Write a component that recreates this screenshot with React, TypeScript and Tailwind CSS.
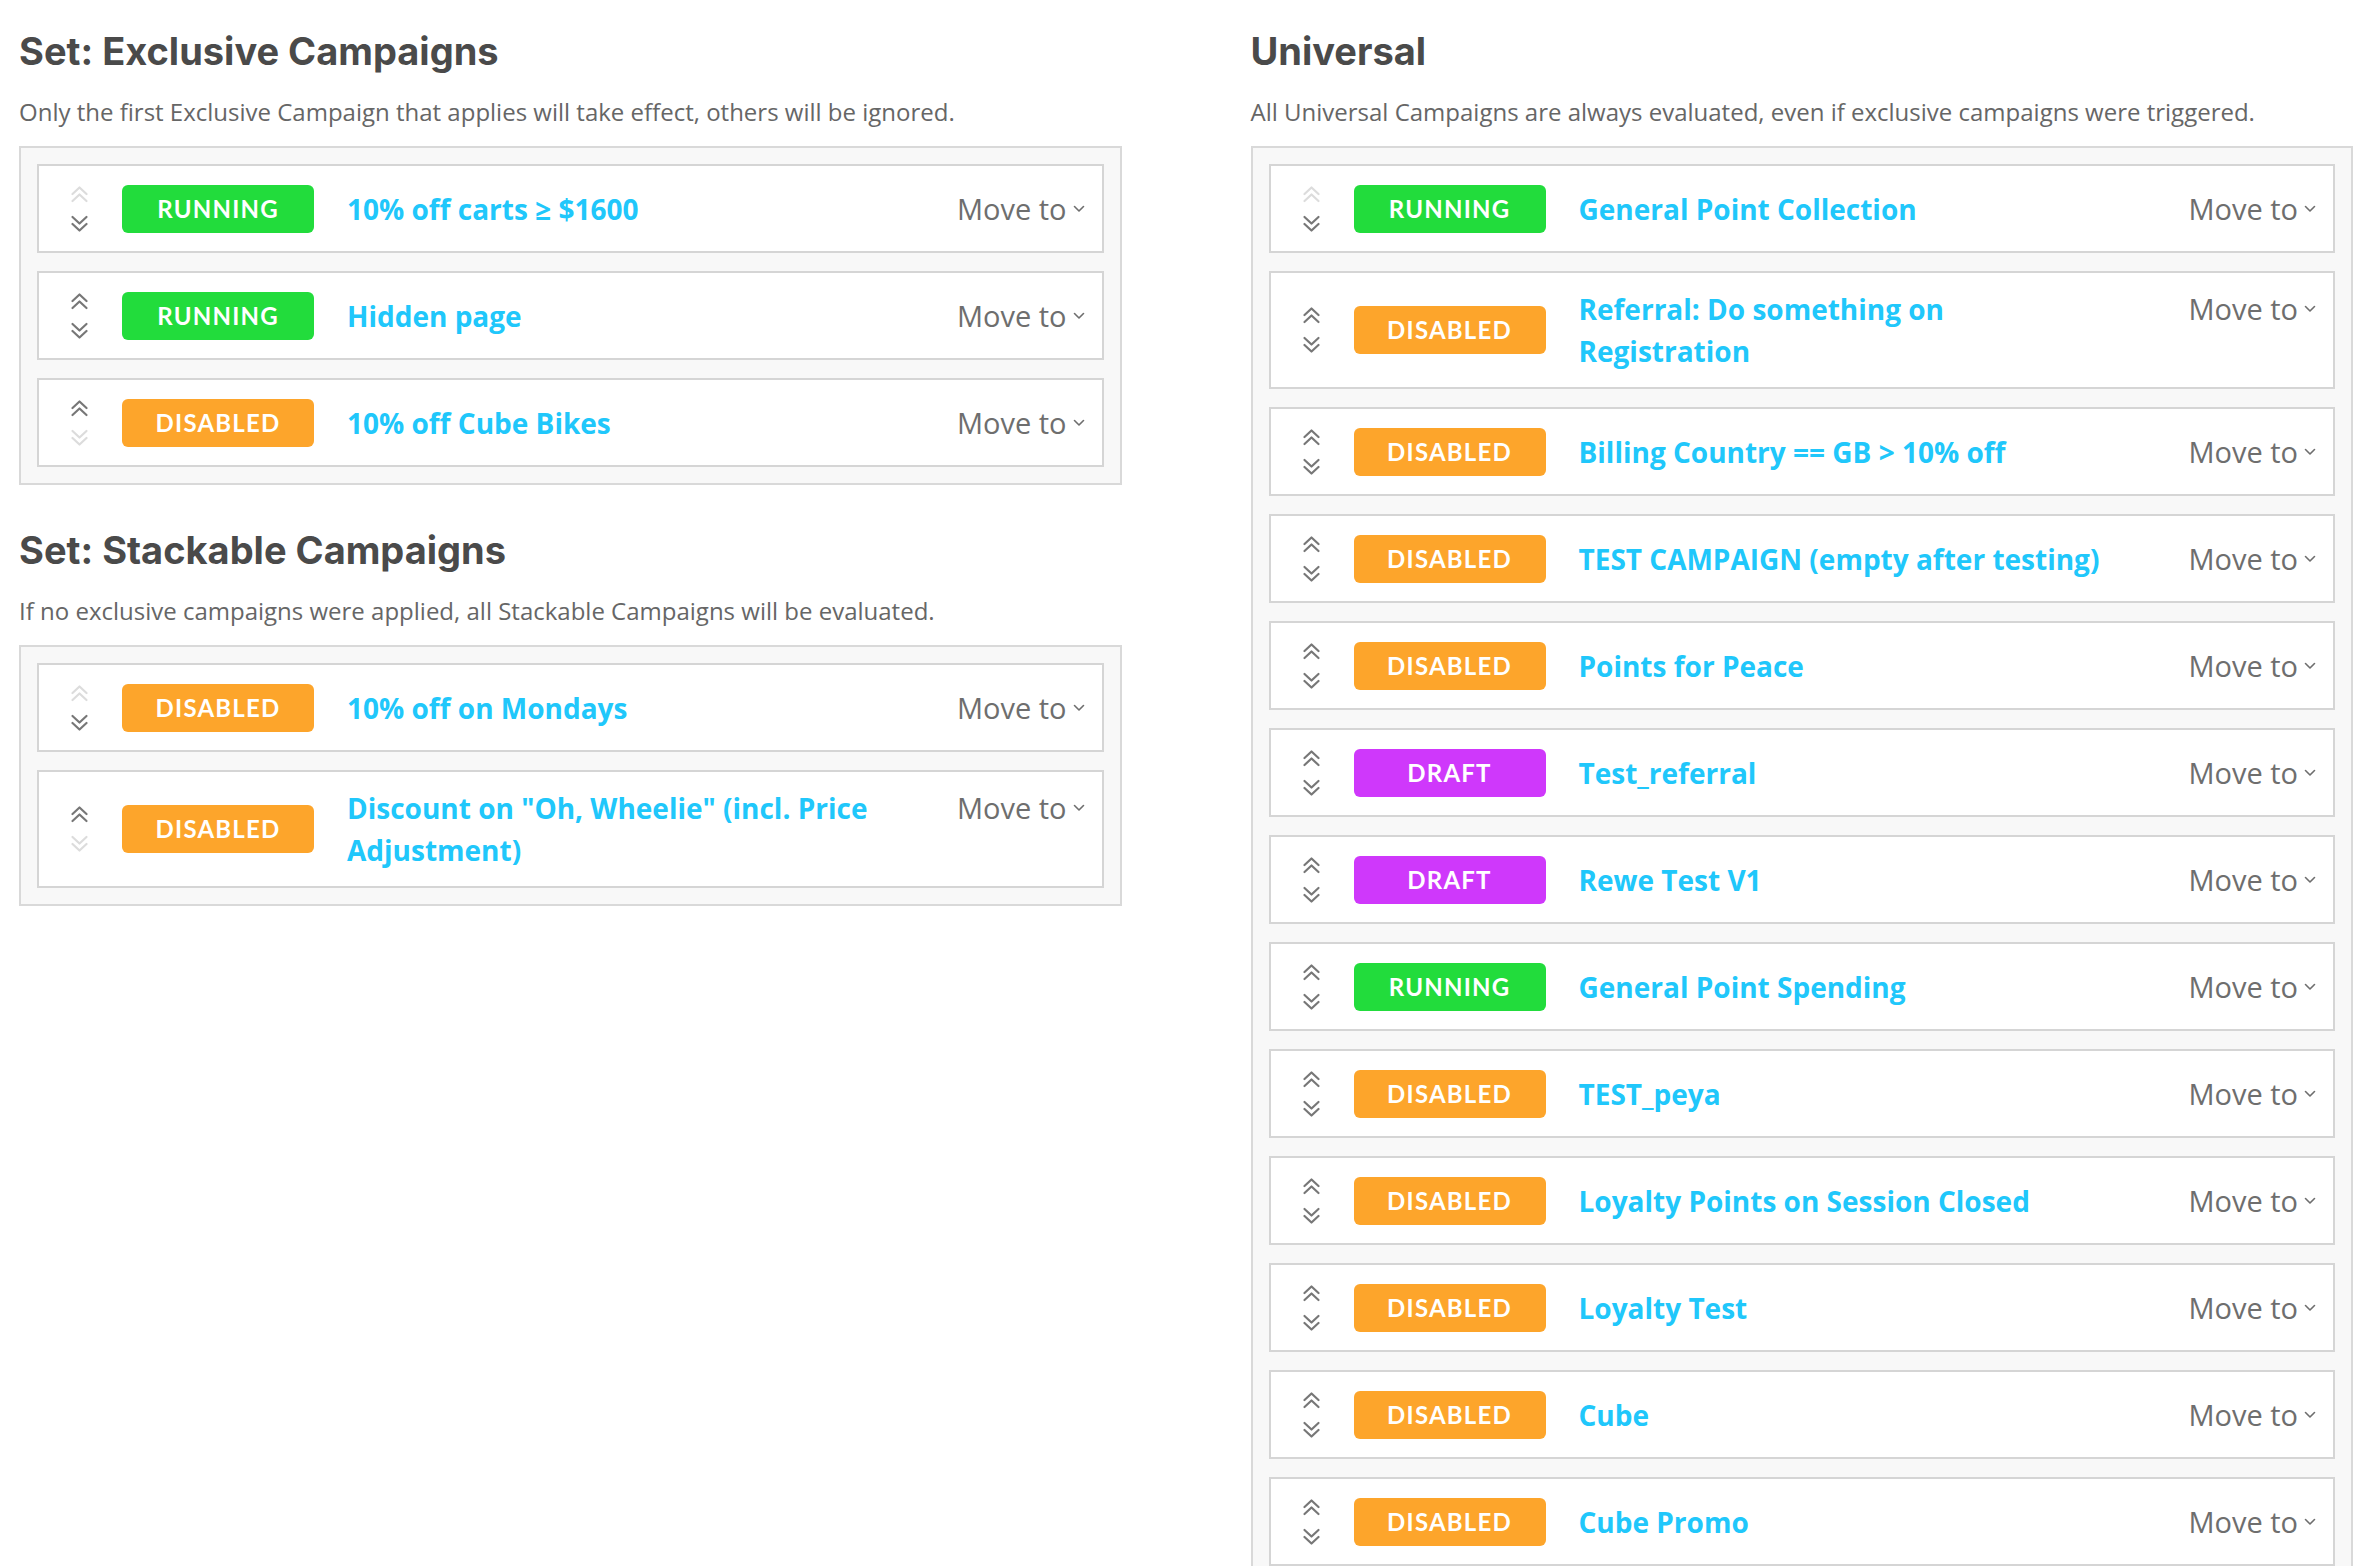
import React from "react";

type Status = "RUNNING" | "DISABLED" | "DRAFT";

interface Campaign {
    name: string;
    status: Status;
}

const STATUS_STYLES: Record<Status, string> = {
    RUNNING: "bg-[#22dc3c]",
    DISABLED: "bg-[#fda52b]",
    DRAFT: "bg-[#cf38fb]",
};

const EXCLUSIVE: Campaign[] = [
    { name: "10% off carts ≥ $1600", status: "RUNNING" },
    { name: "Hidden page", status: "RUNNING" },
    { name: "10% off Cube Bikes", status: "DISABLED" },
];

const STACKABLE: Campaign[] = [
    { name: "10% off on Mondays", status: "DISABLED" },
    { name: 'Discount on "Oh, Wheelie" (incl. Price Adjustment)', status: "DISABLED" },
];

const UNIVERSAL: Campaign[] = [
    { name: "General Point Collection", status: "RUNNING" },
    { name: "Referral: Do something on Registration", status: "DISABLED" },
    { name: "Billing Country == GB > 10% off", status: "DISABLED" },
    { name: "TEST CAMPAIGN (empty after testing)", status: "DISABLED" },
    { name: "Points for Peace", status: "DISABLED" },
    { name: "Test_referral", status: "DRAFT" },
    { name: "Rewe Test V1", status: "DRAFT" },
    { name: "General Point Spending", status: "RUNNING" },
    { name: "TEST_peya", status: "DISABLED" },
    { name: "Loyalty Points on Session Closed", status: "DISABLED" },
    { name: "Loyalty Test", status: "DISABLED" },
    { name: "Cube", status: "DISABLED" },
    { name: "Cube Promo", status: "DISABLED" },
];

function DoubleChevron({ up, muted }: { up: boolean; muted: boolean }) {
    return (
        <svg
            width="19"
            height="17"
            viewBox="0 0 19 17"
            fill="none"
            stroke={muted ? "#dcdcdc" : "#777777"}
            strokeWidth="2.2"
            strokeLinecap="round"
            strokeLinejoin="round"
            className={up ? "" : "rotate-180"}
        >
            <polyline points="2.5,8 9.5,1.5 16.5,8" />
            <polyline points="2.5,15 9.5,8.5 16.5,15" />
        </svg>
    );
}

function CampaignRow({ campaign, first, last }: { campaign: Campaign; first: boolean; last: boolean }) {
    return (
        <div className="bg-white border-2 border-[#d5d5d5] pl-[31px] pr-[17px] py-[15px]">
            <div className="flex items-center min-h-[55px]">
                <div className="flex flex-col gap-[12px]">
                    <DoubleChevron up muted={first} />
                    <DoubleChevron up={false} muted={last} />
                </div>
                <span
                    className={`ml-[33px] flex h-[48px] w-[192px] shrink-0 items-center justify-center rounded-[6px] text-[24px] font-bold tracking-[0.05em] text-white font-['Lato',sans-serif] ${STATUS_STYLES[campaign.status]}`}
                >
                    {campaign.status}
                </span>
                <div className="ml-[33px] flex flex-1 items-start justify-between">
                    <a className="w-[530px] text-[28px] leading-[42px] font-bold text-[#20c7fb] font-['Open_Sans',sans-serif] cursor-pointer">
                        {campaign.name}
                    </a>
                    <button className="flex items-center gap-[6px] text-[29px] leading-[42px] text-[#6e6e6e] font-['Open_Sans',sans-serif]">
                        Move to
                        <svg width="12" height="8" viewBox="0 0 12 8" fill="none" stroke="#6e6e6e" strokeWidth="1.6" strokeLinecap="round" strokeLinejoin="round">
                            <polyline points="1.5,1.5 6,6 10.5,1.5" />
                        </svg>
                    </button>
                </div>
            </div>
        </div>
    );
}

function CampaignSet({
    title,
    description,
    campaigns,
    continues = false,
}: {
    title: string;
    description: string;
    campaigns: Campaign[];
    continues?: boolean;
}) {
    return (
        <section>
            <h2 className="text-[38px] leading-[46px] font-bold text-[#4a4a4a] font-['Inter',sans-serif]">{title}</h2>
            <p className="mt-[23px] text-[24px] leading-[30px] text-[#666666] font-['Open_Sans',sans-serif]">{description}</p>
            <div className="mt-[19px] border-2 border-[#d9d9d9] bg-[#f8f8f8] p-4 flex flex-col gap-[18px]">
                {campaigns.map((c, i) => (
                    <CampaignRow
                        key={c.name}
                        campaign={c}
                        first={i === 0}
                        last={!continues && i === campaigns.length - 1}
                    />
                ))}
            </div>
        </section>
    );
}

export default function App() {
    return (
        <div className="min-h-screen bg-white px-[19px] pt-[28px] pb-10">
            <div className="grid grid-cols-2 gap-x-[129px] items-start">
                <div className="flex flex-col gap-[42px]">
                    <CampaignSet
                        title="Set: Exclusive Campaigns"
                        description="Only the first Exclusive Campaign that applies will take effect, others will be ignored."
                        campaigns={EXCLUSIVE}
                    />
                    <CampaignSet
                        title="Set: Stackable Campaigns"
                        description="If no exclusive campaigns were applied, all Stackable Campaigns will be evaluated."
                        campaigns={STACKABLE}
                    />
                </div>
                <CampaignSet
                    title="Universal"
                    description="All Universal Campaigns are always evaluated, even if exclusive campaigns were triggered."
                    campaigns={UNIVERSAL}
                    continues
                />
            </div>
        </div>
    );
}
